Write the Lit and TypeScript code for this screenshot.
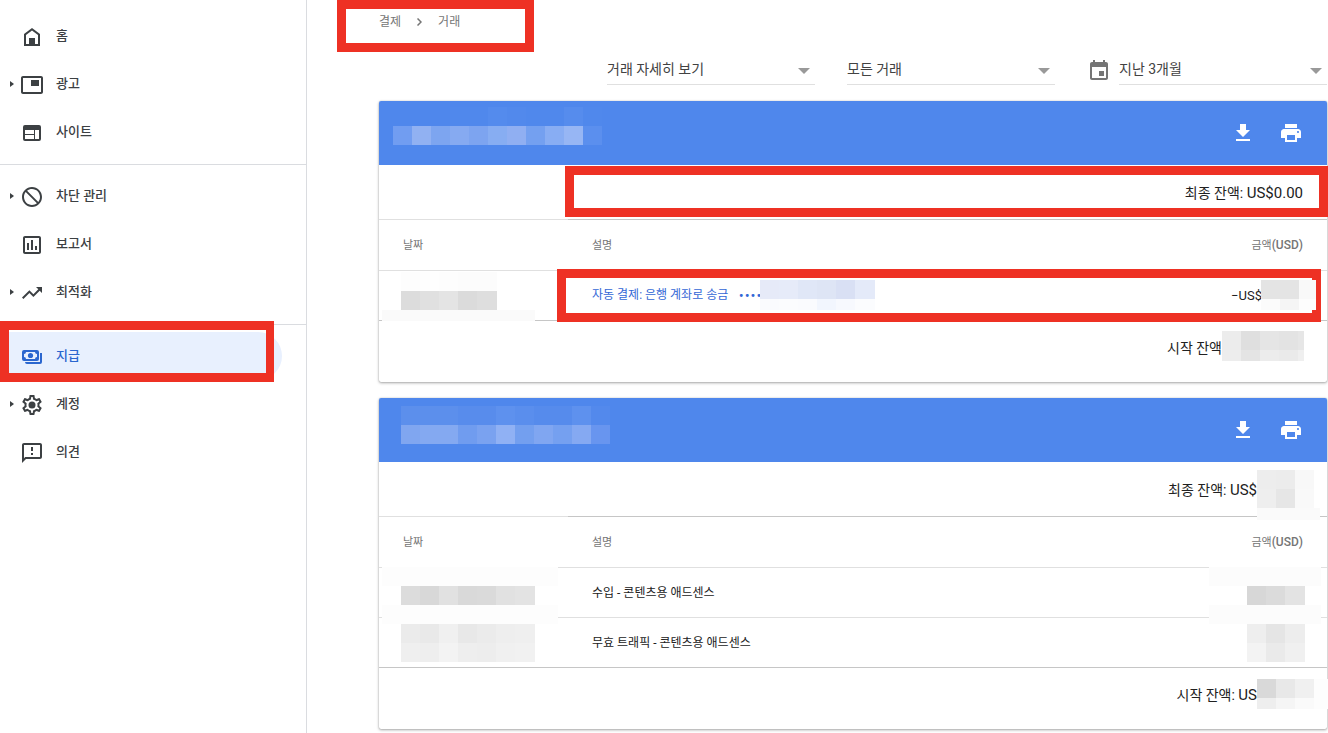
import { LitElement, html, svg, css, nothing } from "lit";
import { customElement, property } from "lit/decorators.js";
import { classMap } from "lit/directives/class-map.js";
import { styleMap } from "lit/directives/style-map.js";

const icons: Record<string, unknown> = {
  home: svg`<path fill-rule="evenodd" d="M12 3 4 9v12h16V9l-8-6zM6 19v-9l6-4.5 6 4.5v9h-3v-6H9v6H6z"/>`,
  ads: svg`<path d="M19 7h-8v6h8V7zm2-4H3c-1.1 0-2 .9-2 2v14c0 1.1.9 1.98 2 1.98h18c1.1 0 2-.88 2-1.98V5c0-1.1-.9-2-2-2zm0 16.01H3V4.98h18v14.03z"/>`,
  sites: svg`<path fill-rule="evenodd" d="M5 4h14a2 2 0 0 1 2 2v12a2 2 0 0 1-2 2H5a2 2 0 0 1-2-2V6a2 2 0 0 1 2-2zM5 9v4h9V9H5zm0 5v4h9v-4H5zm10-5v9h4V9h-4z"/>`,
  block: svg`<path d="M12 2C6.48 2 2 6.48 2 12s4.48 10 10 10 10-4.48 10-10S17.52 2 12 2zM4 12c0-4.42 3.58-8 8-8 1.85 0 3.55.63 4.9 1.69L5.69 16.9C4.63 15.55 4 13.85 4 12zm8 8c-1.85 0-3.55-.63-4.9-1.69L18.31 7.1C19.37 8.45 20 10.15 20 12c0 4.42-3.58 8-8 8z" transform="matrix(-1 0 0 1 24 0)"/>`,
  reports: svg`<path d="M19 3H5c-1.1 0-2 .9-2 2v14c0 1.1.9 2 2 2h14c1.1 0 2-.9 2-2V5c0-1.1-.9-2-2-2zm0 16H5V5h14v14zM7 10h2v7H7zm4-3h2v10h-2zm4 6h2v4h-2z"/>`,
  trend: svg`<path d="M16 6l2.29 2.29-4.88 4.88-4-4L2 16.59 3.41 18l6-6 4 4 6.3-6.29L22 12V6z"/>`,
  payments: svg`<path fill-rule="evenodd" d="M4 5h13a2 2 0 0 1 2 2v7a2 2 0 0 1-2 2H4a2 2 0 0 1-2-2V7a2 2 0 0 1 2-2zm2 2a2 2 0 0 1-2 2v3a2 2 0 0 1 2 2h9a2 2 0 0 1 2-2V9a2 2 0 0 1-2-2H6z"/><circle cx="10.500" cy="10.500" r="2.600"/><path d="M20 8h2v9a2 2 0 0 1-2 2H7a2 2 0 0 1-2-2h15V8z"/>`,
  settings: svg`<path d="M19.43 12.98c.04-.32.07-.64.07-.98s-.03-.66-.07-.98l2.11-1.65c.19-.15.24-.42.12-.64l-2-3.46c-.09-.16-.26-.25-.44-.25-.06 0-.12.01-.17.03l-2.49 1c-.52-.4-1.08-.73-1.69-.98l-.38-2.65C14.46 2.18 14.25 2 14 2h-4c-.25 0-.46.18-.49.42l-.38 2.65c-.61.25-1.17.59-1.69.98l-2.490-1c-.06-.02-.12-.03-.18-.03-.17 0-.34.09-.43.25l-2 3.46c-.13.22-.07.49.12.64l2.110 1.650c-.04.32-.07.65-.07.98s.03.66.07.98l-2.110 1.650c-.19.15-.24.42-.12.64l2 3.460c.09.16.26.25.44.25.06 0 .12-.01.17-.03l2.490-1c.52.4 1.080.73 1.690.98l.38 2.650c.03.24.24.42.49.42h4c.25 0 .46-.18.49-.42l.38-2.650c.61-.25 1.170-.59 1.690-.98l2.490 1c.06.02.12.03.18.03.17 0 .34-.09.43-.25l2-3.460c.12-.22.07-.49-.12-.64l-2.110-1.650zm-1.980-1.710c.04.31.05.52.05.73 0 .21-.02.43-.05.73l-.14 1.130.89.7 1.080.84-.7 1.210-1.270-.51-1.040-.42-.9.68c-.43.32-.84.56-1.250.73l-1.060.43-.16 1.130-.2 1.350h-1.400l-.19-1.350-.16-1.130-1.060-.43c-.43-.18-.83-.41-1.230-.71l-.91-.7-1.060.43-1.270.51-.7-1.210 1.080-.84.89-.7-.14-1.130c-.03-.31-.05-.54-.05-.74s.02-.43.05-.73l.14-1.130-.89-.7-1.080-.84.7-1.210 1.270.51 1.040.42.9-.68c.43-.32.84-.56 1.250-.73l1.060-.43.16-1.130.2-1.350h1.390l.19 1.350.16 1.130 1.060.43c.43.18.83.41 1.230.71l.91.7 1.060-.43 1.270-.51.7 1.210-1.070.85-.89.7.14 1.130z"/><circle cx="12" cy="12" r="3.500"/>`,
  feedback: svg`<path d="M20 2H4c-1.1 0-2 .9-2 2v18l4-4h14c1.1 0 2-.9 2-2V4c0-1.1-.9-2-2-2zm0 14H5.170L4 17.170V4h16v12zM11 12h2v2h-2zm0-6h2v4h-2z"/>`,
  calendar: svg`<path d="M17 12h-5v5h5v-5zM16 1v2H8V1H6v2H5c-1.11 0-1.99.9-1.99 2L3 19c0 1.1.89 2 2 2h14c1.1 0 2-.9 2-2V5c0-1.100-.9-2-2-2h-1V1h-2zm3 18H5V8h14v11z"/>`,
  download: svg`<path d="M19 9h-4V3H9v6H5l7 7 7-7zM5 18v2h14v-2H5z"/>`,
  print: svg`<path d="M19 8H5c-1.660 0-3 1.340-3 3v6h4v4h12v-4h4v-6c0-1.660-1.340-3-3-3zm-3 11H8v-5h8v5zm3-7c-.55 0-1-.45-1-1s.45-1 1-1 1 .45 1 1-.45 1-1 1zm-1-9H6v4h12V3z"/>`,
};

const icon = (name: string) =>
  html`<svg class="icon" viewBox="0 0 24 24" width="24" height="24" aria-hidden="true">${icons[name]}</svg>`;

interface NavItem {
  label: string;
  icon: string;
  expandable?: boolean;
  selected?: boolean;
}

const navGroups: NavItem[][] = [
  [
    { label: "홈", icon: "home" },
    { label: "광고", icon: "ads", expandable: true },
    { label: "사이트", icon: "sites" },
  ],
  [
    { label: "차단 관리", icon: "block", expandable: true },
    { label: "보고서", icon: "reports" },
    { label: "최적화", icon: "trend", expandable: true },
  ],
  [
    { label: "지급", icon: "payments", selected: true },
    { label: "계정", icon: "settings", expandable: true },
    { label: "의견", icon: "feedback" },
  ],
];

/** One block of pixelation. Colours run left to right in 19px cells. */
interface Strip {
  x: number;
  y: number;
  w: number;
  h: number;
  colors: string[];
}

/** Pixelated patch laid over a card, pinned to its left or right edge. */
interface Patch {
  side: "left" | "right";
  offset: number;
  top: number;
  width: number;
  height: number;
  strips: Strip[];
}

interface Amount {
  label?: string;
  money?: string;
  hidden: number;
}

interface Entry {
  text: string;
  link?: boolean;
  amount: Amount;
}

interface Statement {
  closing: Amount;
  opening: Amount;
  entries: Entry[];
  patches: Patch[];
  marked: boolean;
}

const CELL = 19;
const strip = (x: number, y: number, w: number, h: number, colors: string): Strip => ({
  x, y, w, h, colors: colors.split(" ").map((c) => "#" + c),
});

const statements: Statement[] = [
  {
    closing: { label: "최종 잔액: ", money: "US$0.00", hidden: 0 },
    opening: { label: "시작 잔액", hidden: 81 },
    entries: [
      { text: "자동 결제: 은행 계좌로 송금", link: true, amount: { money: "−US$", hidden: 41 } },
    ],
    marked: true,
    patches: [
      {
        side: "left", offset: 14, top: 6, width: 209, height: 38,
        strips: [
          strip(0, 0, 209, 19, "4f87ec 4f87ec 4f87ec 5088ec 5088ec 548bed 5289ec 5088ec 5088ec 568ced 5088ec"),
          strip(0, 19, 209, 19, "719df1 91b1f2 7da5f0 86aaf1 7da4f0 87adf2 90aff2 74a0f0 88adf3 97b6f4 5b8fee"),
        ],
      },
      {
        side: "left", offset: 3, top: 171, width: 153, height: 49,
        strips: [
          strip(19, 0, 96, 19, "fdfdfd fefefe fdfdfd fcfcfc fcfcfc"),
          strip(19, 19, 96, 19, "dcdcdc e0e0e0 e4e4e4 dbdbdb dedede"),
          strip(0, 38, 153, 11, "fafafa"),
        ],
      },
      {
        side: "left", offset: 381, top: 179, width: 115, height: 30,
        strips: [
          strip(0, 0, 115, 19, "e6eaf8 e6ebf9 e0e7f7 dee5f5 d9e0f4 e4eaf9"),
          strip(0, 19, 115, 11, "fafbfe fbfcfe fafbfe f2f6fe f7f9fe fbfcfe"),
        ],
      },
      {
        side: "right", offset: 11, top: 179, width: 55, height: 30,
        strips: [
          strip(0, 0, 55, 19, "e4e4e4 e4e4e4 f9f9f9"),
          strip(0, 19, 55, 11, "fbfbfb f5f5f5 fdfdfd"),
        ],
      },
      {
        side: "right", offset: 23, top: 230, width: 82, height: 30,
        strips: [
          strip(0, 0, 82, 19, "ececec dfdfdf e5e5e5 e3e3e3 e6e6e6"),
          strip(0, 19, 82, 11, "ededed e4e4e4 ececec eaeaea efefef"),
        ],
      },
    ],
  },
  {
    closing: { label: "최종 잔액: ", money: "US$", hidden: 46 },
    opening: { label: "시작 잔액: ", money: "US", hidden: 46 },
    entries: [
      { text: "수입 - 콘텐츠용 애드센스", amount: { hidden: 58 } },
      { text: "무효 트래픽 - 콘텐츠용 애드센스", amount: { hidden: 58 } },
    ],
    marked: false,
    patches: [
      {
        side: "left", offset: 22, top: 8, width: 209, height: 38,
        strips: [
          strip(0, 0, 209, 19, "5c8fec 5c8fec 5c8fec 588cec 588cec 5e91ee 5a8eed 568bec 568bec 5e91ee 5389ec"),
          strip(0, 19, 209, 19, "80a6f0 84a9f1 84a9f1 709cef 7aa2f0 90b1f4 739fef 80a6f1 75a0f0 85a9f2 6895ef"),
        ],
      },
      {
        side: "right", offset: 7, top: 72, width: 63, height: 50,
        strips: [
          strip(0, 0, 57, 19, "ededed ececec f8f8f8"),
          strip(0, 19, 57, 19, "eeeeee e6e6e6 f9f9f9"),
          strip(0, 38, 63, 12, "fafafa"),
        ],
      },
      {
        side: "left", offset: 3, top: 169, width: 176, height: 95,
        strips: [
          strip(0, 0, 176, 19, "fdfdfd"),
          strip(19, 19, 134, 19, "dcdcdc d8d8d8 e1e1e1 d9d9d9 dadada e1e1e1 e3e3e3"),
          strip(0, 38, 176, 19, "fdfdfd"),
          strip(19, 57, 134, 19, "ebebeb e9e9e9 f0f0f0 e8e8e8 ebebeb eeeeee efefef"),
          strip(19, 76, 134, 19, "efefef eeeeee f3f3f3 eeeeee ededed f0f0f0 f1f1f1"),
        ],
      },
      {
        side: "right", offset: 6, top: 169, width: 112, height: 95,
        strips: [
          strip(0, 0, 112, 19, "fcfcfc"),
          strip(38, 19, 58, 19, "d7d7d7 dbdbdb e3e3e3"),
          strip(0, 38, 112, 19, "fcfcfc"),
          strip(38, 57, 58, 19, "eeeeee e5e5e5 ededed"),
          strip(38, 76, 58, 19, "f3f3f3 eaeaea f0f0f0"),
        ],
      },
      {
        side: "right", offset: -1, top: 281, width: 71, height: 30,
        strips: [
          strip(0, 0, 71, 19, "d9d9d9 e8e8e8 f0f0f0 fdfdfd"),
          strip(0, 19, 71, 11, "eeeeee f5f5f5 fafafa fdfdfd"),
        ],
      },
    ],
  },
];

@customElement("side-nav")
export class SideNav extends LitElement {
  static styles = css`
    :host { display: block; box-sizing: border-box; width: 307px; flex: none; border-right: 1px solid #dadce0; padding-top: 12px; }
    .divider { height: 1px; margin: 8px 0 7px; border: 0; background: #dadce0; }
    .list { margin: 0; padding: 0; list-style: none; }
    .row { position: relative; }
    .item {
      display: flex; align-items: center; box-sizing: border-box; height: 48px; margin-right: 24px; padding-left: 8px;
      border-radius: 0 24px 24px 0; color: #3c4043; font-size: 13px; line-height: 20px; font-weight: 500; text-decoration: none;
    }
    .selected { background: #e8f0fe; color: #2a66cf; }
    .caret { width: 12px; flex: none; display: flex; padding-left: 2px; box-sizing: border-box; }
    .caret-shape { fill: #3c4043; }
    .icon { flex: none; fill: currentColor; margin: 2px 12px 0 0; }
    .mark { position: absolute; left: 0; top: -11px; width: 274px; height: 61px; box-sizing: border-box; border: 9px solid #ee3124; border-right-width: 8px; pointer-events: none; }
  `;

  render() {
    return html`<nav aria-label="주 메뉴">
      ${navGroups.map(
        (group, i) => html`
          ${i ? html`<hr class="divider" />` : nothing}
          <ul class="list">
            ${group.map(
              (item) => html`<li class="row">
                <a href="#" class=${classMap({ item: true, selected: !!item.selected })} aria-current=${item.selected ? "page" : nothing}>
                  <span class="caret">
                    ${item.expandable
                      ? html`<svg class="caret-shape" width="4" height="6" viewBox="0 0 4 6" aria-hidden="true"><path d="M0 0l4 3-4 3z" /></svg>`
                      : nothing}
                  </span>
                  ${icon(item.icon)}<span>${item.label}</span>
                </a>
                ${item.selected ? html`<div class="mark"></div>` : nothing}
              </li>`
            )}
          </ul>
        `
      )}
    </nav>`;
  }
}

@customElement("filter-select")
export class FilterSelect extends LitElement {
  @property() label = "";
  @property() value = "";

  static styles = css`
    :host { display: block; width: 208px; }
    .field { display: grid; align-items: center; border-bottom: 1px solid #e0e0e0; height: 31px; }
    .control {
      grid-area: 1 / 1; width: 100%; height: 31px; padding: 0 24px 0 0; border: 0; background: none; appearance: none;
      font: inherit; font-size: 14px; color: #424242;
    }
    .arrow { grid-area: 1 / 1; justify-self: end; margin: 5px 5px 0 0; fill: #999; pointer-events: none; }
  `;

  render() {
    return html`<div class="field">
      <select class="control" aria-label=${this.label}><option>${this.value}</option></select>
      <svg class="arrow" width="12" height="6" viewBox="0 0 12 6" aria-hidden="true"><path d="M0 0h12L6 6z" /></svg>
    </div>`;
  }
}

@customElement("statement-card")
export class StatementCard extends LitElement {
  @property({ attribute: false }) data!: Statement;

  static styles = css`
    :host { display: block; position: relative; background: #fff; border-radius: 2px; box-shadow: 0 1px 3px rgba(0, 0, 0, 0.35), 0 0 1px rgba(0, 0, 0, 0.3); }
    .head { display: flex; align-items: center; justify-content: flex-end; gap: 24px; height: 64px; padding: 0 24px; background: #4f87ec; border-radius: 2px 2px 0 0; }
    .action { display: flex; padding: 0; border: 0; background: none; color: #fff; }
    .icon { fill: currentColor; }
    .table { width: 100%; border-collapse: separate; border-spacing: 0; table-layout: fixed; font-size: 12px; color: #212121; }
    .date { width: 189px; }
    .value { width: 180px; }
    .cell { box-sizing: border-box; padding: 0 24px; text-align: left; font-weight: 400; border-bottom: 1px solid #e0e0e0; line-height: 16px; }
    .summary { height: 55px; padding-top: 1px; }
    .labels { height: 51px; padding-top: 1px; font-size: 11px; color: #757575; }
    .entry { height: 50px; }
    .final { height: 61px; border-bottom: 0; padding-bottom: 8px; }
    .balance { font-size: 14px; }
    .strong { border-bottom-color: #c6c6c6; }
    .end { text-align: right; white-space: nowrap; }
    .money { font-size: 13px; }
    .balance .money { font-size: 15px; }
    .usd { font-size: 12px; font-weight: 500; }
    .link { color: #3367d6; text-decoration: none; }
    .dots { margin-left: 10px; font-family: "DejaVu Sans", sans-serif; font-size: 10px; }
    .hidden { display: inline-block; }
    .patch { position: absolute; display: block; pointer-events: none; }
    .mark { position: absolute; box-sizing: border-box; border: 9px solid #ee3124; pointer-events: none; }
    .mark-closing { left: 186px; right: -1px; top: 65px; height: 51px; }
    .mark-entry { left: 178px; right: 6px; top: 168px; height: 53px; }
  `;

  private amount(a: Amount) {
    return html`${a.label ?? nothing}${a.money ? html`<span class="money">${a.money}</span>` : nothing}${a.hidden
      ? html`<span class="hidden" style=${styleMap({ width: a.hidden + "px" })}></span>`
      : nothing}`;
  }

  private patch(p: Patch) {
    return html`<svg
      class="patch" width=${p.width} height=${p.height} shape-rendering="crispEdges" aria-hidden="true"
      style=${styleMap({ [p.side]: p.offset + "px", top: p.top + "px" })}
    >
      ${p.strips.map((s) =>
        s.colors.map((c, i) => {
          const last = i === s.colors.length - 1;
          const width = last ? s.w - i * CELL : CELL;
          return svg`<rect x=${s.x + i * CELL} y=${s.y} width=${width} height=${s.h} fill=${c} />`;
        })
      )}
    </svg>`;
  }

  render() {
    const d = this.data;
    return html`
      <div class="head">
        <button class="action" aria-label="다운로드">${icon("download")}</button>
        <button class="action" aria-label="인쇄">${icon("print")}</button>
      </div>
      <table class="table">
        <colgroup><col class="date" /><col /><col class="value" /></colgroup>
        <thead>
          <tr>
            <td class="cell summary"></td>
            <td class="cell summary balance strong end" colspan="2">${this.amount(d.closing)}</td>
          </tr>
          <tr>
            <th class="cell labels" scope="col">날짜</th>
            <th class="cell labels" scope="col">설명</th>
            <th class="cell labels end" scope="col">금액<span class="usd">(USD)</span></th>
          </tr>
        </thead>
        <tbody>
          ${d.entries.map((e, i) => {
            const strong = i === d.entries.length - 1;
            const cls = { cell: true, entry: true, strong };
            return html`<tr>
              <td class=${classMap(cls)}></td>
              <td class=${classMap(cls)}>
                ${e.link ? html`<a class="link" href="#">${e.text}<span class="dots">••••</span></a>` : e.text}
              </td>
              <td class=${classMap({ ...cls, end: true })}>${this.amount(e.amount)}</td>
            </tr>`;
          })}
        </tbody>
        <tfoot>
          <tr><td class="cell final balance end" colspan="3">${this.amount(d.opening)}</td></tr>
        </tfoot>
      </table>
      ${d.marked ? html`<div class="mark mark-closing"></div><div class="mark mark-entry"></div>` : nothing}
      ${d.patches.map((p) => this.patch(p))}
    `;
  }
}

@customElement("app-root")
export class AppRoot extends LitElement {
  static styles = css`
    :host { display: flex; min-height: 100vh; background: #fff; font-family: Roboto, "Noto Sans CJK KR", sans-serif; overflow: hidden; }
    .main { flex: 1; min-width: 0; padding: 0 1px 3px 72px; }
    .crumbs { position: relative; display: flex; align-items: center; gap: 16px; padding: 13px 0 22px; font-size: 12px; line-height: 18px; color: #757575; }
    .crumb { color: inherit; text-decoration: none; }
    .chevron { fill: none; stroke: #757575; stroke-width: 1.5; }
    .mark { position: absolute; left: -42px; top: 0; width: 197px; height: 52px; box-sizing: border-box; border: 9px solid #ee3124; pointer-events: none; }
    .filters { display: flex; justify-content: flex-end; gap: 32px; }
    .period { display: flex; gap: 8px; }
    .icon { fill: #757575; margin-top: 6px; }
    .cards { display: grid; gap: 16px; margin-top: 16px; }
  `;

  render() {
    return html`
      <side-nav></side-nav>
      <main class="main">
        <div class="crumbs">
          <a class="crumb" href="#">결제</a>
          <svg class="chevron" width="5" height="8" viewBox="0 0 5 8" aria-hidden="true"><path d="M.5.5L4 4 .5 7.500" /></svg>
          <a class="crumb" href="#">거래</a>
          <div class="mark"></div>
        </div>
        <div class="filters">
          <filter-select label="보기" value="거래 자세히 보기"></filter-select>
          <filter-select label="거래 유형" value="모든 거래"></filter-select>
          <div class="period">
            ${icon("calendar")}
            <filter-select label="기간" value="지난 3개월"></filter-select>
          </div>
        </div>
        <div class="cards">${statements.map((s) => html`<statement-card .data=${s}></statement-card>`)}</div>
      </main>
    `;
  }
}
